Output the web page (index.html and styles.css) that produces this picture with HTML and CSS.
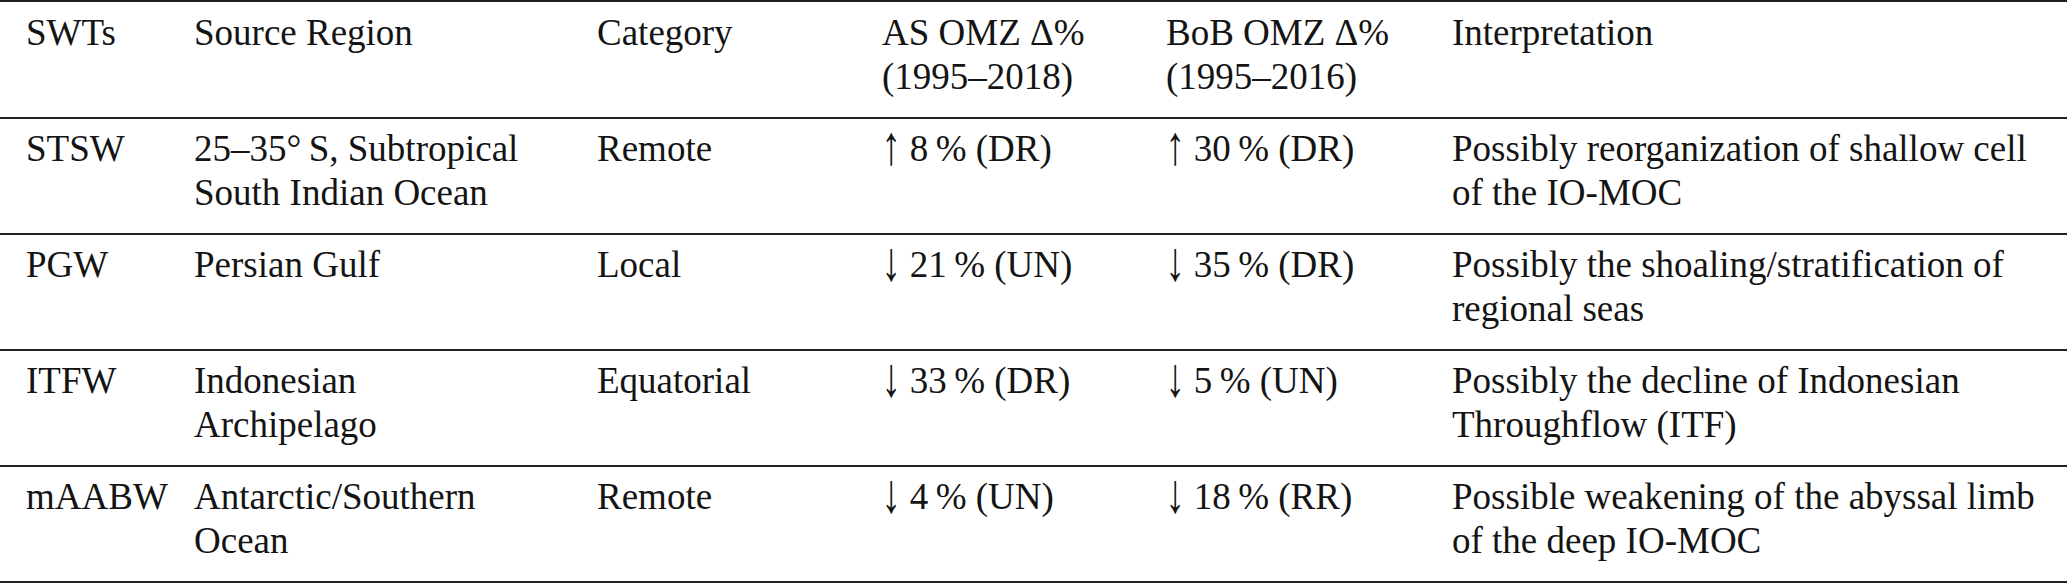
FILE: index.html
```html
<!DOCTYPE html>
<html lang="en">
<head>
<meta charset="utf-8">
<title>SWTs table</title>
<link rel="stylesheet" href="styles.css">
</head>
<body>
<table class="swt-table">
  <colgroup>
    <col class="c-swt">
    <col class="c-src">
    <col class="c-cat">
    <col class="c-as">
    <col class="c-bob">
    <col class="c-int">
  </colgroup>
  <thead>
    <tr>
      <th class="cell first">SWTs</th>
      <th class="cell src">Source Region</th>
      <th class="cell">Category</th>
      <th class="cell">AS OMZ Δ% <span class="nw">(1995–2018)</span></th>
      <th class="cell">BoB OMZ Δ% <span class="nw">(1995–2016)</span></th>
      <th class="cell int">Interpretation</th>
    </tr>
  </thead>
  <tbody>
    <tr>
      <td class="cell first">STSW</td>
      <td class="cell src">25–35°&#8201;S, Subtropical South Indian Ocean</td>
      <td class="cell">Remote</td>
      <td class="cell"><span class="arr">↑</span> 8&#8201;% (DR)</td>
      <td class="cell"><span class="arr">↑</span> 30&#8201;% (DR)</td>
      <td class="cell int">Possibly reorganization of shallow cell of the IO-MOC</td>
    </tr>
    <tr>
      <td class="cell first">PGW</td>
      <td class="cell src">Persian Gulf</td>
      <td class="cell">Local</td>
      <td class="cell"><span class="arr">↓</span> 21&#8201;% (UN)</td>
      <td class="cell"><span class="arr">↓</span> 35&#8201;% (DR)</td>
      <td class="cell int">Possibly the shoaling/stratification of regional seas</td>
    </tr>
    <tr>
      <td class="cell first">ITFW</td>
      <td class="cell src">Indonesian Archipelago</td>
      <td class="cell">Equatorial</td>
      <td class="cell"><span class="arr">↓</span> 33&#8201;% (DR)</td>
      <td class="cell"><span class="arr">↓</span> 5&#8201;% (UN)</td>
      <td class="cell int">Possibly the decline of Indonesian Throughflow (ITF)</td>
    </tr>
    <tr>
      <td class="cell first">mAABW</td>
      <td class="cell src">Antarctic/Southern Ocean</td>
      <td class="cell">Remote</td>
      <td class="cell"><span class="arr">↓</span> 4&#8201;% (UN)</td>
      <td class="cell"><span class="arr">↓</span> 18&#8201;% (RR)</td>
      <td class="cell int">Possible weakening of the abyssal limb of the deep IO-MOC</td>
    </tr>
  </tbody>
</table>
</body>
</html>
```

FILE: styles.css
```css
html, body {
  margin: 0;
  padding: 0;
  background: #ffffff;
}

.swt-table {
  width: 2067px;
  table-layout: fixed;
  border-collapse: separate;
  border-spacing: 0;
  font-family: "Liberation Serif", "Times New Roman", serif;
  font-size: 37px;
  line-height: 44px;
  color: #141414;
}

.c-swt { width: 194px; }
.c-src { width: 403px; }
.c-cat { width: 285px; }
.c-as  { width: 284px; }
.c-bob { width: 286px; }
.c-int { width: 615px; }

.cell {
  text-align: left;
  vertical-align: top;
  font-weight: normal;
  padding: 8px 0 18px 0;
  border-bottom: 2px solid #231f20;
}

thead .cell {
  padding-top: 9px;
  border-top: 2px solid #231f20;
}

.cell.first {
  padding-left: 26px;
}

.cell.src {
  padding-right: 60px;
}

.cell.int {
  padding-right: 15px;
}

.nw {
  white-space: nowrap;
}

.arr {
  display: inline-block;
  transform: scale(1.05, 1.5) translateY(1px);
  transform-origin: 50% 70%;
}
```
